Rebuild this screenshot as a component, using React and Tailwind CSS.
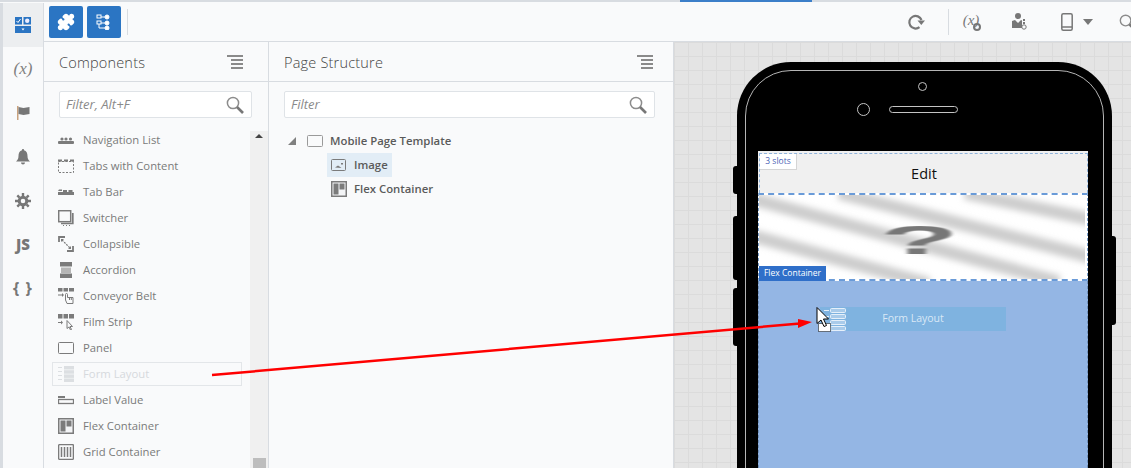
import React from 'react';
import { Puzzle } from 'lucide-react';

const G = '#7b7b7b';

// Small gallery icons, 16x16 box
const NavList = () => (
  <svg width="16" height="16" viewBox="0 0 16 16" fill={G}>
    <circle cx="4" cy="7" r="1.6" /><circle cx="8" cy="7" r="1.6" /><circle cx="12.5" cy="7" r="1.6" />
    <rect x="0" y="9" width="16" height="3" rx="1" />
  </svg>
);
const TabsContent = () => (
  <svg width="16" height="16" viewBox="0 0 16 16" fill="none" stroke={G}>
    <path d="M.5 3.5h15v11H.5z" strokeDasharray="2 1.5" />
    <path d="M0 2.5h4M6 2.5h4M12 2.5h4" strokeWidth="2" />
  </svg>
);
const TabBar = () => (
  <svg width="16" height="16" viewBox="0 0 16 16" fill={G}>
    <path d="M0 7h4v-1.500h-3zM5 6h4v2h-4zM10.500 6h4v2h-4z" />
    <rect x="0" y="8" width="16" height="3" />
  </svg>
);
const Switcher = () => (
  <svg width="16" height="16" viewBox="0 0 16 16" fill="none" stroke={G}>
    <rect x=".7" y=".7" width="12" height="11" strokeWidth="1.500" />
    <path d="M14.800 3v10.500H3" strokeWidth="1.700" />
    <path d="M5 15.500h1M8 15.500h1M11 15.500h1" />
  </svg>
);
const Collapsible = () => (
  <svg width="16" height="16" viewBox="0 0 16 16" fill="none" stroke={G} strokeWidth="1.800">
    <path d="M1 6V1h6M15 10v5H9" />
    <path d="M4 4l8 8" strokeWidth="1.200" strokeDasharray="2 1" />
    <path d="M3 3h3L3 6zM13 13h-3l3-3z" fill={G} stroke="none" />
  </svg>
);
const Accordion = () => (
  <svg width="16" height="16" viewBox="0 0 16 16" fill={G}>
    <rect x="2" y="0" width="12" height="4.500" />
    <rect x="3" y="5.500" width="10" height="5.500" fill="#b5b5b5" />
    <rect x="2" y="11.500" width="12" height="4.500" />
  </svg>
);
const Conveyor = () => (
  <svg width="16" height="16" viewBox="0 0 16 16" fill={G}>
    <rect x="0" y="0" width="4.500" height="3.500" /><rect x="5.500" y="0" width="4.500" height="3.500" /><rect x="11" y="0" width="5" height="3.500" />
    <path d="M0 6.500h4V5l2 2-2 2V7.500H0z" />
    <path d="M7.500 12V6.500a1 1 0 012 0V9.500h5.500v6H9z" fill="#f9fafb" stroke={G} />
    <path d="M11.500 10v2M13.300 10v2" stroke={G} />
  </svg>
);
const FilmStrip = () => (
  <svg width="16" height="16" viewBox="0 0 16 16" fill={G}>
    <rect x="0" y="0" width="4.500" height="4.500" /><rect x="5.500" y="0" width="4.500" height="4.500" /><rect x="11" y="0" width="5" height="4.500" />
    <path d="M0 8h3V6.500L5 8.500 3 10.500V9H0z" />
    <path d="M9 6.500v8l2-1.500 1.500 3 1-.5-1.500-3h2.500z" fill="none" stroke={G} />
  </svg>
);
const PanelIcon = ({ color = G }) => (
  <svg width="16" height="16" viewBox="0 0 16 16" fill="none" stroke={color}>
    <rect x=".5" y="2.500" width="15" height="11" rx="1" />
  </svg>
);
const FormIcon = ({ color = '#dcdfe2' }) => (
  <svg width="16" height="16" viewBox="0 0 16 16" fill={color}>
    <rect x="6" y="0" width="10" height="3.500" /><rect x="6" y="4.200" width="10" height="3.500" />
    <rect x="6" y="8.400" width="10" height="3.500" /><rect x="6" y="12.500" width="10" height="3.500" />
    <rect x="0" y="1" width="4" height="1" /><rect x="0" y="5" width="4" height="1" />
    <rect x="0" y="9" width="4" height="1" /><rect x="0" y="13" width="4" height="1" />
  </svg>
);
const DragFormIcon = () => (
  <svg width="22" height="24" viewBox="0 0 22 24" fill="#a9cbea" stroke="#e6f0fa">
    <rect x="6.500" y=".5" width="15" height="4" rx="1" />
    <rect x="6.500" y="6.500" width="15" height="4" rx="1" />
    <rect x="6.500" y="12.500" width="15" height="4" rx="1" />
    <rect x="6.500" y="18.500" width="15" height="4" rx="1" />
    <path d="M0 2.500h5M0 8.500h5" fill="none" />
  </svg>
);
const LabelValue = () => (
  <svg width="16" height="16" viewBox="0 0 16 16" fill="none" stroke={G}>
    <rect x="0" y="4" width="7" height="2" fill={G} stroke="none" />
    <rect x=".5" y="7.500" width="15" height="4" strokeWidth="1.300" />
  </svg>
);
const FlexIcon = () => (
  <svg width="16" height="16" viewBox="0 0 16 16">
    <rect x="0" y="0" width="16" height="16" fill={G} />
    <rect x="1.500" y="1.500" width="13" height="13" fill="#f3f4f6" />
    <rect x="2.500" y="2.500" width="5" height="11" fill={G} />
    <rect x="8.500" y="2.500" width="5" height="6" fill={G} />
  </svg>
);
const GridIcon = () => (
  <svg width="16" height="16" viewBox="0 0 16 16" fill="none" stroke={G}>
    <rect x=".6" y=".6" width="14.800" height="14.800" rx="1" strokeWidth="1.400" />
    <path d="M3.500 3v10M6.500 3v10M9.500 3v10M12.500 3v10" strokeWidth="1.500" />
  </svg>
);
const ImageIcon = () => (
  <svg width="16" height="16" viewBox="0 0 16 16" fill="none" stroke={G}>
    <rect x=".5" y="2.500" width="14" height="11" rx="1" />
    <path d="M4 10.500l3-2 1.500 1 2 1.500z" fill={G} stroke="none" />
    <rect x="10" y="6" width="2" height="1.500" fill={G} stroke="none" />
  </svg>
);
const MenuLines = () => (
  <svg width="16" height="16" viewBox="0 0 16 16" fill="#8a8a8a">
    <rect x="0" y="1" width="16" height="2" /><rect x="4" y="5" width="12" height="2" />
    <rect x="4" y="9" width="12" height="2" /><rect x="4" y="13" width="12" height="2" />
  </svg>
);
const Lens = ({ size = 18 }) => (
  <svg width={size} height={size} viewBox="0 0 18 18" fill="none">
    <circle cx="7" cy="7" r="5.600" stroke="#8c8c8c" strokeWidth="1.500" />
    <path d="M11 11l6 6" stroke="#777" strokeWidth="2.600" />
  </svg>
);

const gallery = [
  ['Navigation List', NavList],
  ['Tabs with Content', TabsContent],
  ['Tab Bar', TabBar],
  ['Switcher', Switcher],
  ['Collapsible', Collapsible],
  ['Accordion', Accordion],
  ['Conveyor Belt', Conveyor],
  ['Film Strip', FilmStrip],
  ['Panel', PanelIcon],
  ['Form Layout', FormIcon],
  ['Label Value', LabelValue],
  ['Flex Container', FlexIcon],
  ['Grid Container', GridIcon],
];

const FilterBox = ({ placeholder, className }) => (
  <div className={`flex h-[27px] items-center justify-between rounded-[2px] border border-[#dfe3e7] bg-white pl-[6px] pr-[7px] ${className}`}>
    <span className="pt-px text-[13px] italic text-[#8a8a8a]">{placeholder}</span>
    <Lens />
  </div>
);

const PanelHead = ({ title, className }) => (
  <div className={`flex h-[40px] items-center justify-between border-b border-[#d8dce1] pl-[15px] ${className}`}>
    <span className="pt-[2px] text-[14.500px] font-light tracking-[0.2px] text-[#444]">{title}</span>
    <MenuLines />
  </div>
);

const RailIcons = () => (
  <div className="flex w-[41px] shrink-0 flex-col border-r border-[#d8dce1] bg-[#f9fafb]">
    <div className="flex h-[44px] items-center justify-center bg-[#eceef0]">
      <svg width="16" height="16" viewBox="0 0 16 16">
        <rect x="0" y="0" width="7" height="7.500" fill="#2b75c3" />
        <rect x="8.500" y="0" width="7.500" height="7.500" fill="#2b75c3" />
        <path d="M1.500 4l1.500 1.500L5.500 2" stroke="#fff" fill="none" />
        <circle cx="12.200" cy="3.700" r="2.200" fill="#eef" />
        <rect x="0" y="9" width="16" height="7" fill="#2b75c3" />
        <path d="M6.500 11.500h3L8 13.500z" fill="#fff" />
      </svg>
    </div>
    <div className="flex h-[44px] items-center justify-center font-['Liberation_Serif',serif] text-[17px] italic text-[#808080]">(x)</div>
    <div className="flex h-[44px] items-center justify-center">
      <svg width="16" height="16" viewBox="0 0 16 16">
        <rect x="2" y="1" width="1.500" height="14" fill="#c9a27e" />
        <path d="M3.500 2l5 1 6-1v7l-6 1-5-1z" fill="#777" />
      </svg>
    </div>
    <div className="flex h-[44px] items-center justify-center">
      <svg width="16" height="16" viewBox="0 0 16 16" fill="#777">
        <path d="M8 0a1 1 0 011 1.200C11.500 2 12.500 4 12.500 7c0 3 1 4 2.500 5.500H1C2.500 11 3.500 10 3.500 7c0-3 1-5 3.500-5.800A1 1 0 018 0zM6 13.500h4a2 2 0 01-4 0z" />
      </svg>
    </div>
    <div className="flex h-[44px] items-center justify-center">
      <svg width="16" height="16" viewBox="0 0 16 16" fill="none" stroke="#777">
        <circle cx="8" cy="8" r="3.800" strokeWidth="3" />
        <path d="M8 0v3M8 13v3M0 8h3M13 8h3M2.300 2.300l2 2M11.700 11.700l2 2M13.700 2.300l-2 2M4.300 11.700l-2 2" strokeWidth="2.400" />
      </svg>
    </div>
    <div className="flex h-[44px] items-center justify-center pb-[2px] font-['Open_Sans',sans-serif] text-[15px] font-extrabold text-[#777]">JS</div>
    <div className="flex h-[44px] items-center justify-center pb-[2px] font-['Open_Sans',sans-serif] text-[16px] font-bold tracking-[1px] text-[#777]">{'{ }'}</div>
  </div>
);

const Toolbar = () => (
  <div className="flex h-[39px] items-center border-b border-[#d8dce1] bg-[#f9fafb] pl-[5px]">
    <div className="mr-[4px] flex h-[32px] w-[34px] items-center justify-center rounded-[2px] bg-[#2b75c3]">
      <Puzzle size={18} fill="#fff" stroke="#fff" />
    </div>
    <div className="flex h-[32px] w-[34px] items-center justify-center rounded-[2px] bg-[#2b75c3]">
      <svg width="16" height="16" viewBox="0 0 16 16" fill="none" stroke="#fff">
        <rect x="1" y="1" width="4" height="3" /><rect x="1" y="7" width="4" height="3" />
        <circle cx="11" cy="3" r="2" fill="#fff" /><circle cx="11" cy="9" r="2" fill="#fff" /><circle cx="11" cy="14" r="2" fill="#fff" />
        <path d="M5 3h4M5 9h4M3 10v4h6" />
      </svg>
    </div>
    <div className="ml-[6px] h-[26px] w-px bg-[#d8dce1]" />
    <div className="flex-1" />
    <svg width="18" height="18" viewBox="0 0 18 18" fill="none" stroke="#777" strokeWidth="2.200" className="mr-[23px]">
      <path d="M12.500 14.200A6.300 6.300 0 1 1 14.500 7" />
      <path d="M10.500 7.500h7.500l-3.700 4.500z" fill="#777" stroke="none" />
    </svg>
    <div className="mr-[12px] h-[26px] w-px bg-[#d8dce1]" />
    <div className="relative mr-[31px] flex h-[20px] w-[20px] justify-center font-['Liberation_Serif',serif] text-[15px] italic leading-[16px] text-[#777]">
      (x)
      <span className="absolute bottom-[1px] right-0 h-[8px] w-[8px] rounded-full border-2 border-[#777]" />
    </div>
    <svg width="16" height="18" viewBox="0 0 16 18" fill="#777" className="mr-[33px]">
      <circle cx="6" cy="3" r="3" />
      <path d="M0 15V8l3-1 3 3 3-3 1 .5V15z" />
      <circle cx="12" cy="14" r="2.200" fill="none" stroke="#777" />
      <path d="M11 6h2v2h-2zM11 9h2v2h-2z" />
    </svg>
    <svg width="12" height="18" viewBox="0 0 12 18" fill="none" stroke="#777" strokeWidth="1.500" className="mr-[10px]">
      <rect x=".8" y=".8" width="10.400" height="16.400" rx="1.500" />
      <path d="M1 14h10" />
    </svg>
    <span className="mr-[26px] h-0 w-0 border-x-[5px] border-t-[6px] border-x-transparent border-t-[#777]" />
    <div className="mr-[-5px]"><Lens size={17} /></div>
  </div>
);

const ComponentsPanel = () => (
  <div className="flex w-[225px] shrink-0 flex-col border-r border-[#d8dce1] bg-[#f9fafb]">
    <PanelHead title="Components" className="pr-[25px]" />
    <FilterBox placeholder="Filter, Alt+F" className="ml-[15px] mr-[16px] mt-[9px]" />
    <div className="mt-[9px] flex min-h-0 flex-1">
      <div className="flex-1 pl-[8px] pr-[8px]">
        {gallery.map(([name, Icon]) => {
          const ghost = name === 'Form Layout';
          return (
            <div
              key={name}
              className={`flex items-center gap-[9px] text-[11.300px] ${ghost ? 'my-px h-[24px] border border-[#e3e6e9] pl-[5px] text-[#d6d9dd]' : 'h-[26px] pl-[6px] text-[#7a7a7a]'}`}
            >
              <Icon />
              <span>{name}</span>
            </div>
          );
        })}
      </div>
      <div className="mt-[4px] flex w-[18px] flex-col items-center bg-[#f0f0f0] pt-[3px]">
        <span className="h-0 w-0 border-x-[4px] border-b-[4px] border-x-transparent border-b-[#444]" />
        <div className="flex-1" />
        <div className="h-[10px] w-[13px] bg-[#bdbdbd]" />
      </div>
    </div>
  </div>
);

const StructurePanel = () => (
  <div className="flex w-[405px] shrink-0 flex-col border-r border-[#d8dce1] bg-[#f9fafb]">
    <PanelHead title="Page Structure" className="pr-[20px]" />
    <FilterBox placeholder="Filter" className="ml-[15px] mr-[18px] mt-[9px]" />
    <div className="mt-[11px] pl-[19px] text-[11.350px] font-semibold text-[#5a5a5a]">
      <div className="flex h-[24px] items-center">
        <span className="mr-[11px] h-0 w-0 border-b-[8px] border-l-[8px] border-b-[#808080] border-l-transparent" />
        <PanelIcon color="#9a9a9a" />
        <span className="ml-[7px]">Mobile Page Template</span>
      </div>
      <div className="ml-[39px] flex h-[24px] w-[65px] items-center bg-[#e2edf6] pl-[4px]">
        <ImageIcon />
        <span className="ml-[7px]">Image</span>
      </div>
      <div className="ml-[43px] flex h-[24px] items-center">
        <FlexIcon />
        <span className="ml-[7px]">Flex Container</span>
      </div>
    </div>
  </div>
);

const Stripes = () => (
  <svg width="326" height="84" viewBox="0 1 326 84" className="block bg-white">
    <defs>
      <filter id="soft" x="-10%" y="-50%" width="120%" height="200%">
        <feGaussianBlur stdDeviation="3.200" />
      </filter>
      <filter id="softer"><feGaussianBlur stdDeviation="0.700" /></filter>
    </defs>
    <g stroke="#cdcdcd" strokeWidth="13" filter="url(#soft)">
      <path d="M206 -1L340 27" />
      <path d="M80 -1L340 65" />
      <path d="M-10 4L300 88" />
      <path d="M-10 41L170 90" />
    </g>
    <text
      transform="translate(121 60) scale(3 0.960)"
      fontFamily="Liberation Sans, sans-serif"
      fontWeight="700"
      fontSize="43"
      fill="#777"
      filter="url(#softer)"
    >
      ?
    </text>
  </svg>
);

const Phone = () => (
  <div className="relative ml-[63px] mt-[20px] h-[520px] w-[375px] rounded-[54px] bg-black pl-[21px] pr-[24px] pt-[89px]">
    {/* side buttons */}
    <span className="absolute left-[-4px] top-[104px] h-[28px] w-[4px] rounded-l-[3px] bg-black" />
    <span className="absolute left-[-4px] top-[154px] h-[64px] w-[4px] rounded-l-[3px] bg-black" />
    <span className="absolute left-[-4px] top-[226px] h-[58px] w-[4px] rounded-l-[3px] bg-black" />
    <span className="absolute right-[-4px] top-[174px] h-[89px] w-[4px] rounded-r-[3px] bg-black" />
    {/* inner outline */}
    <span className="absolute left-[8px] right-[8px] top-[8px] h-[520px] rounded-[46px] border border-[#b5b5b5]" />
    {/* camera and speaker */}
    <span className="absolute left-[181px] top-[20px] h-[9px] w-[9px] rounded-full border border-[#c4c4c4]" />
    <span className="absolute left-[120px] top-[41px] h-[13px] w-[13px] rounded-full border border-[#c4c4c4]" />
    <span className="absolute left-[152px] top-[44px] h-[7px] w-[69px] rounded-full border border-[#c4c4c4]" />

    <div className="relative flex h-[431px] flex-col font-['Open_Sans',sans-serif]">
      <div className="h-[42px] shrink-0 bg-[#f0f0f0] pl-px pt-[2px]">
        <div className="relative flex h-[40px] items-center justify-center border-x border-t border-dashed border-[#8fb3dc] text-[14.500px] text-[#111]">
          <span className="mt-[1px] pl-[1px]">Edit</span>
          <span className="absolute left-0 top-0 flex h-[16px] w-[37px] items-center justify-center border-b border-r border-[#d5d5d5] bg-white text-[8.500px] text-[#4a5fb5]">
            3 slots
          </span>
        </div>
      </div>
      <div className="relative h-[88px] shrink-0 border-x border-y-2 border-dashed border-x-[#7a9fcb] border-y-[#6a9bd8] bg-white">
        <Stripes />
        <span className="absolute bottom-[-2px] left-0 flex h-[15px] w-[67px] items-center justify-center bg-[#2f6fc9] text-[8.500px] text-white">
          Flex Container
        </span>
      </div>
      <div className="flex-1 border-x border-dashed border-x-[#6f8fb8] bg-[#94b6e4] pl-[61px] pt-[26px]">
        <div className="relative flex h-[24px] w-[186px] items-center justify-center bg-[#7fb3e0] text-[10.500px] text-[#d9e8f6]">
          <span className="absolute left-[4px] top-[1px]"><DragFormIcon /></span>
          Form Layout
        </div>
      </div>
    </div>
  </div>
);

export default function App() {
  return (
    <div className="relative h-[468px] w-[1131px] overflow-hidden bg-[#f9fafb] font-['Open_Sans',sans-serif]">
      <div className="relative h-[3px] border-t-2 border-[#d8dce1] bg-[#f9fafb]">
        <span className="absolute left-[680px] top-[-2px] h-[2px] w-[132px] bg-[#3c7fc9]" />
      </div>
      <div className="flex h-[465px] border-l-[3px] border-[#d8dce1]">
        <RailIcons />
        <div className="flex min-w-0 flex-1 flex-col">
          <Toolbar />
          <div className="flex min-h-0 flex-1">
            <ComponentsPanel />
            <StructurePanel />
            <div className="min-w-0 flex-1 overflow-hidden bg-[#e4e4e4] bg-[linear-gradient(#dbdbdb_1px,transparent_1px),linear-gradient(90deg,#dbdbdb_1px,transparent_1px)] bg-[size:14px_14px]">
              <Phone />
            </div>
          </div>
        </div>
      </div>

      {/* annotation arrow and drag cursor on top of the screenshot */}
      <svg width="1131" height="468" viewBox="0 0 1131 468" className="pointer-events-none absolute inset-0">
        <path d="M212 375L800 323.500" stroke="#f00" strokeWidth="2.500" />
        <path d="M798 319L812 322L798 328z" fill="#f00" />
        <rect x="818.500" y="323.500" width="12" height="8" fill="#fff" stroke="#000" strokeDasharray="1 1" />
        <path d="M817 307.500v16l4-3.500 3 6.500 2.500-1-3-6.500h5z" fill="#fff" stroke="#000" />
      </svg>
    </div>
  );
}
